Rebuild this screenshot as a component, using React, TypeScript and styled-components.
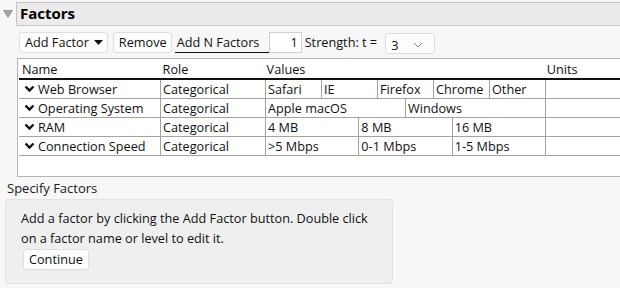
import React from 'react';
import styled, { createGlobalStyle } from 'styled-components';

const GlobalStyle = createGlobalStyle`
  html, body {
    margin: 0;
    padding: 0;
    background: #f7f7f7;
    overflow: hidden;
  }
  body {
    font-family: 'Open Sans', 'Noto Sans', sans-serif;
    font-size: 12.7px;
    color: #111;
  }
`;

type FactorRow = {
  name: string;
  role: string;
  values: string[];
};

const factors: FactorRow[] = [
  { name: 'Web Browser', role: 'Categorical', values: ['Safari', 'IE', 'Firefox', 'Chrome', 'Other'] },
  { name: 'Operating System', role: 'Categorical', values: ['Apple macOS', 'Windows'] },
  { name: 'RAM', role: 'Categorical', values: ['4 MB', '8 MB', '16 MB'] },
  { name: 'Connection Speed', role: 'Categorical', values: ['>5 Mbps', '0-1 Mbps', '1-5 Mbps'] },
];

const Chevron = () => (
  <svg width="11" height="8" viewBox="0 0 11 8">
    <polyline points="1.5,1.5 5.5,5.5 9.5,1.5" fill="none" stroke="#111" strokeWidth="2.4" />
  </svg>
);

const App = () => {
  return (
    <Page>
      <GlobalStyle />
      <Outline>
        <Disclosure>
          <svg width="10" height="8" viewBox="0 0 10 8">
            <polygon points="0.5,0.5 9.5,0.5 5,7.5" fill="#a8a8a8" stroke="#8c8c8c" strokeWidth="0.8" />
          </svg>
        </Disclosure>
        <TitleBar>Factors</TitleBar>
      </Outline>

      <Content>
        <Toolbar>
          <ToolButton $gap={5}>
            Add Factor
            <svg width="9" height="5" viewBox="0 0 9 5">
              <polygon points="0,0 9,0 4.5,5" fill="#111" />
            </svg>
          </ToolButton>
          <ToolButton>Remove</ToolButton>
          <UnderlinedLabel>Add N Factors</UnderlinedLabel>
          <NumberBox>1</NumberBox>
          <Label>Strength: t =</Label>
          <Select>
            <span>3</span>
            <svg width="10" height="6" viewBox="0 0 10 6">
              <polyline points="1,1 5,5 9,1" fill="none" stroke="#888" strokeWidth="1" />
            </svg>
          </Select>
        </Toolbar>

        <TableBox>
          <HeaderRow>
            <HeadCell $width={142}>Name</HeadCell>
            <HeadCell $width={105}>Role</HeadCell>
            <HeadCell $width={280}>Values</HeadCell>
            <HeadCell $width={80} $pad={6}>Units</HeadCell>
          </HeaderRow>
          {factors.map((f) => (
            <Row key={f.name}>
              <NameCell>
                <Chevron />
                {f.name}
              </NameCell>
              <Cell $width={105}>{f.role}</Cell>
              <ValuesCell>
                {f.values.map((v) => (
                  <ValueItem key={v}>{v}</ValueItem>
                ))}
              </ValuesCell>
              <UnitsCell />
            </Row>
          ))}
        </TableBox>
      </Content>

      <SectionLabel>Specify Factors</SectionLabel>
      <Panel>
        <PanelText>
          Add a factor by clicking the Add Factor button. Double click on a factor name or level to edit it.
        </PanelText>
        <ContinueButton>Continue</ContinueButton>
      </Panel>
    </Page>
  );
};

const Page = styled.div`
  width: 620px;
  height: 288px;
  padding-top: 2px;
  box-sizing: border-box;
`;

const Outline = styled.div`
  display: flex;
  align-items: stretch;
  height: 24px;
`;

const Disclosure = styled.div`
  width: 16px;
  display: flex;
  justify-content: flex-start;
  padding-left: 3px;
  padding-top: 8px;
  box-sizing: border-box;
`;

const TitleBar = styled.div`
  flex: 1;
  background: #ebebeb;
  border: 1px solid #c6c6c6;
  border-right: none;
  font-weight: 700;
  font-size: 15px;
  line-height: 21px;
  padding-left: 3px;
  color: #000;
`;

const Content = styled.div`
  padding-left: 17px;
`;

const Toolbar = styled.div`
  display: flex;
  align-items: center;
  height: 22px;
  margin-top: 5px;
  padding-left: 2px;
`;

const ToolButton = styled.div<{ $gap?: number }>`
  display: flex;
  align-items: center;
  gap: ${(p) => p.$gap ?? 0}px;
  height: 21px;
  box-sizing: border-box;
  padding: 0 4px 0 5px;
  margin-right: 5px;
  background: #fdfdfd;
  border: 1px solid #dedede;
  border-radius: 3px;
  white-space: nowrap;
`;

const UnderlinedLabel = styled.div`
  height: 21px;
  box-sizing: border-box;
  width: 94px;
  margin-left: -2px;
  padding-left: 2px;
  line-height: 20px;
  border-bottom: 1px solid #111;
  white-space: nowrap;
`;

const NumberBox = styled.div`
  width: 33px;
  height: 21px;
  box-sizing: border-box;
  background: #fff;
  border: 1px solid #cfcfcf;
  text-align: right;
  padding-right: 3px;
  line-height: 19px;
`;

const Label = styled.div`
  margin-left: 3px;
  white-space: nowrap;
`;

const Select = styled.div`
  display: flex;
  align-items: center;
  justify-content: space-between;
  width: 50px;
  height: 21px;
  margin-left: 8px;
  margin-top: 3px;
  box-sizing: border-box;
  padding: 2px 11px 0 5px;
  background: #fdfdfd;
  border: 1px solid #dedede;
  border-radius: 3px;
`;

const TableBox = styled.div`
  margin-top: 5px;
  height: 119px;
  background: #fff;
  border: 1px solid #b4b4b4;
  border-right: none;
  box-sizing: border-box;
  overflow: hidden;
`;

const HeaderRow = styled.div`
  display: flex;
  height: 21px;
  border-bottom: 2px solid #111;
  box-sizing: border-box;
  margin-left: 1px;
`;

const HeadCell = styled.div<{ $width: number; $pad?: number }>`
  width: ${(p) => p.$width}px;
  padding-left: ${(p) => p.$pad ?? 3}px;
  line-height: 20px;
  box-sizing: border-box;
  white-space: nowrap;
`;

const Row = styled.div`
  display: flex;
  height: 19px;
  border-bottom: 1px solid #a8a39a;
  box-sizing: border-box;
  margin-left: 1px;
`;

const Cell = styled.div<{ $width: number }>`
  width: ${(p) => p.$width}px;
  flex-shrink: 0;
  border-right: 1px solid #a8a39a;
  padding-left: 2px;
  line-height: 18px;
  box-sizing: border-box;
  white-space: nowrap;
`;

const NameCell = styled(Cell).attrs({ $width: 142 })`
  display: flex;
  align-items: center;
  gap: 3px;
  padding-left: 5px;
`;

const ValuesCell = styled.div`
  display: flex;
  width: 280px;
  flex-shrink: 0;
`;

const ValueItem = styled.div`
  flex: 1;
  border-right: 1px solid #a8a39a;
  padding-left: 2px;
  line-height: 18px;
  white-space: nowrap;
  overflow: hidden;
`;

const UnitsCell = styled.div`
  flex: 1;
`;

const SectionLabel = styled.div`
  font-size: 13px;
  color: #1a1a1a;
  padding-left: 7px;
  margin-top: 2px;
  line-height: 18px;
`;

const Panel = styled.div`
  margin: 2px 0 0 5px;
  width: 388px;
  height: 85px;
  box-sizing: border-box;
  background: #efefef;
  border: 1px solid #e2e2e2;
  border-radius: 4px;
  padding: 8px 10px 0 15px;
`;

const PanelText = styled.div`
  line-height: 20px;
  width: 352px;
`;

const ContinueButton = styled.div`
  display: inline-block;
  margin-top: 1px;
  margin-left: 2px;
  height: 21px;
  line-height: 19px;
  box-sizing: border-box;
  padding: 0 5px;
  background: #fdfdfd;
  border: 1px solid #dedede;
  border-radius: 3px;
`;

export default App;
